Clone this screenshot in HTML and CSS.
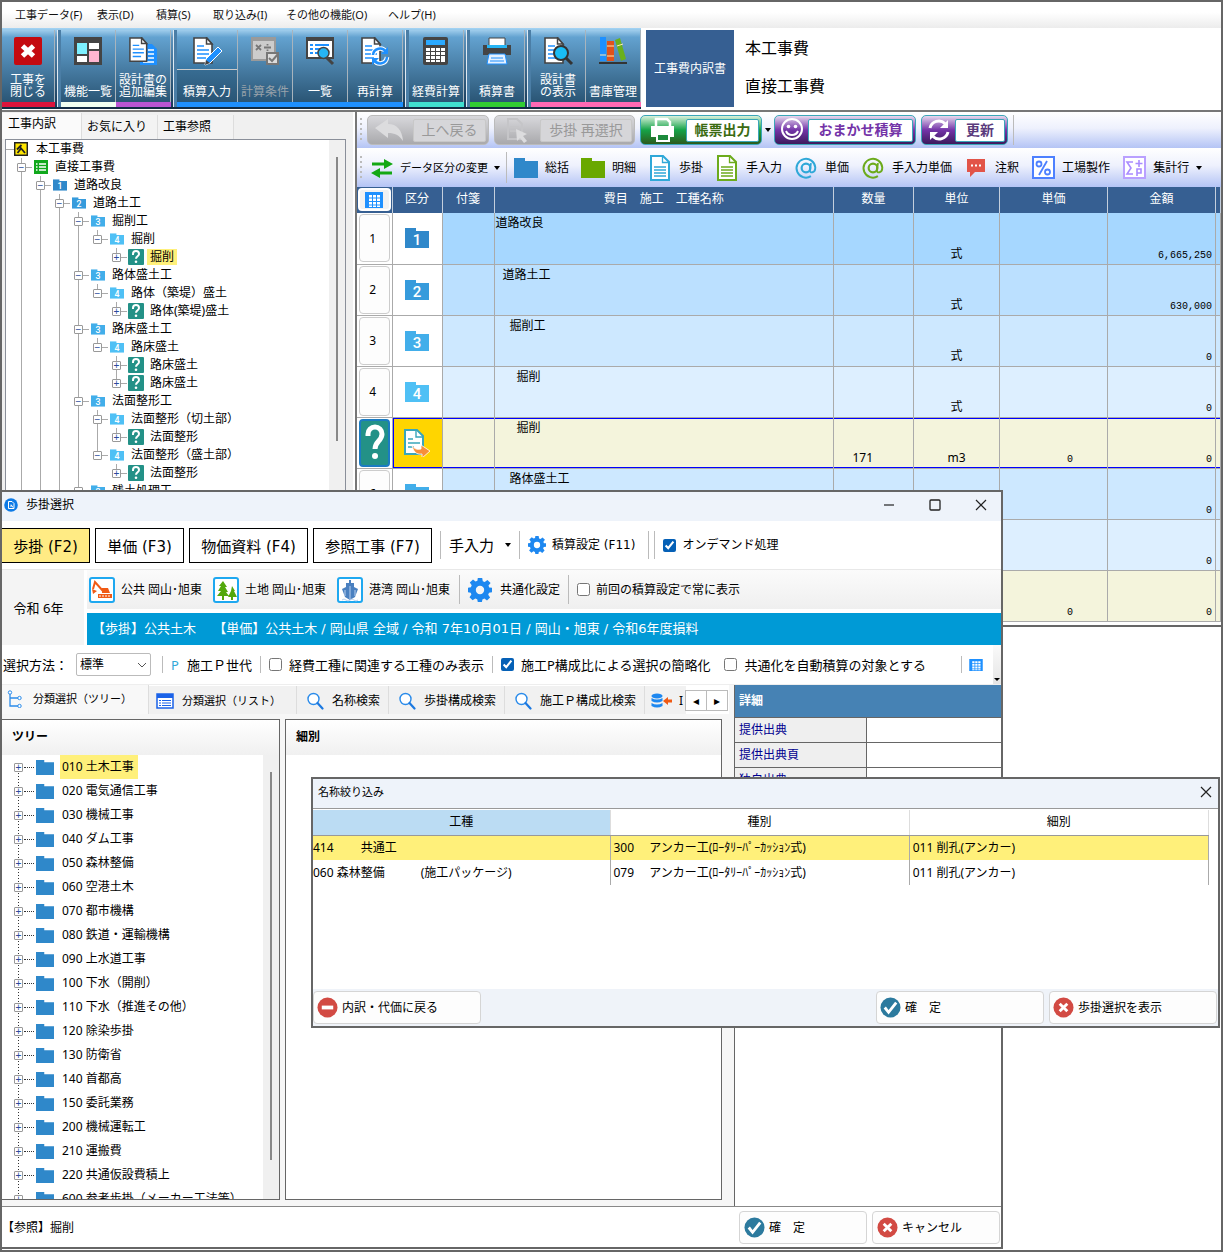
FILE: index.html
```html
<!DOCTYPE html>
<html lang="ja">
<head>
<meta charset="utf-8">
<title>工事費内訳書</title>
<link rel="stylesheet" href="styles.css">
</head>
<body>
<svg class="defs" aria-hidden="true">
  <symbol id="folder" viewBox="0 0 24 20"><path fill="currentColor" d="M0 0h11v3h13v17H0z"/></symbol>
  <symbol id="doc" viewBox="0 0 20 26"><path d="M1 1h12l6 6v18H1z" fill="#fff" stroke="currentColor" stroke-width="2"/><path d="M12.500 1v6.500H19M4 12h12M4 15h12M4 18h12M4 21h12" fill="none" stroke="currentColor" stroke-width="1.300"/></symbol>
  <symbol id="page" viewBox="0 0 28 28"><path d="M1 1h13l5 6v19H1z" fill="#fff" stroke="#444" stroke-width="1.600"/><path d="M13.500 1v6H19z" fill="#fff" stroke="#444" stroke-width="1.500"/><path d="M4 9h7M4 13h12M4 17h12M4 21h9" stroke="#1e90ff" stroke-width="1.500"/></symbol>
  <symbol id="gear" viewBox="0 0 24 24"><path fill="#1e88f0" fill-rule="evenodd" d="M9.800 0h4.400l.6 3.300 1.900.8L19.400 2l3.200 3-2.100 2.500.7 2 2.800.3v4.400l-3 .6-.8 1.900 1.900 2.700-3.100 3.100-2.600-1.900-2 .8-.5 2.600H9.800l-.6-2.800-1.900-.8-2.700 1.900-3.100-3 1.900-2.700-.7-1.900L0 14.200V9.800l2.900-.6.8-1.900L1.800 4.600 5 1.500l2.500 1.900 1.900-.7zM12 7.800a4.200 4.200 0 1 0 0 8.400a4.200 4.200 0 1 0 0-8.400z"/></symbol>
  <symbol id="mag" viewBox="0 0 18 18"><circle cx="7.500" cy="7" r="5.500" fill="#fff" stroke="#2a8bea" stroke-width="1.400"/><path d="M11.500 11l5 5.500" stroke="#1c79e0" stroke-width="2.200" stroke-linecap="round"/></symbol>
  <symbol id="ask" viewBox="0 0 16 16"><rect width="16" height="16" rx="1" fill="#239187"/><path d="M5 6V5a3 3 0 0 1 6 0c0 2.200-3 2.300-3 4.700" fill="none" stroke="#fff" stroke-width="2"/><circle cx="8" cy="12.700" r="1.300" fill="#fff"/></symbol>
  <symbol id="grid" viewBox="0 0 18 16"><path fill="#1e90ff" d="M0 0h18v16H0z"/><path fill="#fff" d="M4 3h3v2.500H4zM8 3h3v2.500H8zM12 3h3v2.500h-3zM4 6.500h3V9H4zM8 6.500h3V9H8zM12 6.500h3V9h-3zM4 10h3v2.500H4zM8 10h3v2.500H8zM12 10h3v2.500h-3zM4 13.500h3V15H4zM8 13.500h3V15H8zM12 13.500h3V15h-3z"/></symbol>
  <symbol id="check" viewBox="0 0 22 22"><circle cx="11" cy="11" r="10.500" fill="#2c7a9e"/><path d="M5 11l4 5 8-10" fill="none" stroke="#fff" stroke-width="3"/></symbol>
  <symbol id="cross" viewBox="0 0 22 22"><circle cx="11" cy="11" r="10.500" fill="#d24a43"/><path d="M7 7l8 8M15 7l-8 8" stroke="#fff" stroke-width="3"/></symbol>
  <symbol id="close" viewBox="0 0 12 12"><path d="M1 1l10 10M11 1L1 11" stroke="#222" stroke-width="1.200"/></symbol>
  <symbol id="at" viewBox="0 0 22 22"><circle cx="11" cy="11" r="4" fill="none" stroke="currentColor" stroke-width="2"/><path d="M15.500 6.500l-1 6.500c-.4 3 5 3 5-2.500a8.600 8.600 0 1 0-4 8" fill="none" stroke="currentColor" stroke-width="1.800"/></symbol>
</svg>

<div class="desktop">
<main class="mainwin">
  <nav class="menubar">
    <a href="#">工事データ(F)</a><a href="#">表示(D)</a><a href="#">積算(S)</a><a href="#">取り込み(I)</a><a href="#">その他の機能(O)</a><a href="#">ヘルプ(H)</a>
  </nav>

  <header class="ribbon">
    <div class="bigbar">
      <div class="grp red">
        <button class="big"><svg viewBox="0 0 28 28"><rect width="28" height="28" rx="2" fill="#c40a10"/><path d="M8.500 9l11 10M19.500 9l-11 10" stroke="#fff" stroke-width="5"/></svg><span>工事を<br>閉じる</span></button>
      </div>
      <div class="grp mint">
        <button class="big"><svg viewBox="0 0 28 28"><path fill="#444" d="M0 0h28v28H0z"/><path fill="#7df0ff" d="M3 6h10v11H3z"/><path fill="#fff" d="M15 6h10v6H15zM3 19h10v6H3z"/><path fill="#ffb6d0" d="M15 14h10v11H15z"/></svg><span>機能一覧</span></button>
      </div>
      <div class="grp violet join">
        <button class="big"><svg viewBox="0 0 28 28"><path d="M11 7h12l5 5v16H11z" fill="#1e90ff"/><path d="M19 13h6M19 17h6M19 21h6M14 25h11" stroke="#fff" stroke-width="1.500"/><use href="#page" width="26" height="26"/></svg><span>設計書の<br>追加編集</span></button>
      </div>
      <div class="grp blue">
        <button class="big wide split"><svg viewBox="0 0 28 28"><use href="#page" width="28" height="28"/><path d="M25 10l4 4-12 12-5 2 1-6z" fill="#1e90ff" stroke="#fff"/><path d="M12 28l1-5 4 3z" fill="#444"/></svg><span>積算入力</span></button>
        <button class="big" disabled><svg viewBox="0 0 28 28"><path fill="#9a9a9a" d="M0 0h25v24H0z"/><path fill="#ccc" d="M2 4h21v18H2z"/><path d="M5 8l5 5M10 8l-5 5M13 10.500h7M16.500 7v1.500M16.500 12.500V14" stroke="#777" stroke-width="1.800"/><path fill="#ddd" stroke="#777" stroke-width="2" d="M16 16h11v11H16z"/><path d="M18 21l3 3 6-7" fill="none" stroke="#777" stroke-width="2"/></svg><span>計算条件</span></button>
        <button class="big"><svg viewBox="0 0 28 28"><path fill="#444" d="M0 0h28v22H0z"/><path fill="#fff" d="M2 4h24v16H2z"/><path d="M4 8h3M4 12h3M4 16h3M9 8h14M9 12h6M9 16h5" stroke="#1e90ff" stroke-width="2"/><path d="M20 20l7 7" stroke="#444" stroke-width="3"/><circle cx="17.500" cy="16" r="5.500" fill="#26b5f5" stroke="#444" stroke-width="1.500"/></svg><span>一覧</span></button>
        <button class="big"><svg viewBox="0 0 28 28"><use href="#page" width="28" height="28"/><path d="M12 18a7 7 0 0 1 13-3M26 20a7 7 0 0 1-13 3" fill="none" stroke="#fff" stroke-width="4.500"/><path d="M12 18a7 7 0 0 1 13-3M26 20a7 7 0 0 1-13 3" fill="none" stroke="#1e90ff" stroke-width="2.500"/><path d="M27 10v7h-7zM11 28v-7h7z" fill="#1e90ff"/></svg><span>再計算</span></button>
      </div>
      <div class="grp turq">
        <button class="big"><svg viewBox="0 0 28 28"><rect x="1" width="25" height="28" rx="2" fill="#444"/><path fill="#2aa9ff" d="M4 3h19v5H4z"/><path fill="#fff" d="M4 11h4v3H4zM9 11h4v3H9zM14 11h4v3h-4zM19 11h4v3h-4zM4 15h4v3H4zM9 15h4v3H9zM14 15h4v3h-4zM19 15h4v3h-4zM4 19h4v3H4zM9 19h4v3H9zM14 19h4v3h-4zM19 19h4v6h-4zM4 23h4v2H4zM9 23h4v2H9zM14 23h4v2h-4z"/></svg><span>経費計算</span></button>
      </div>
      <div class="grp green">
        <button class="big"><svg viewBox="0 0 28 28"><path fill="#fff" stroke="#444" d="M6 1h16v9H6z"/><path fill="#444" d="M0 8h28v10H0z"/><path fill="#26b5f5" d="M4 8h20v3H4z"/><path fill="#e5f1ff" stroke="#1e90ff" d="M6 17h16l2 10H4z"/><path d="M8 21h12M7 24h14" stroke="#1e90ff"/></svg><span>積算書</span></button>
      </div>
      <div class="grp pink">
        <button class="big"><svg viewBox="0 0 28 28"><use href="#page" width="28" height="28"/><path d="M21 20l7 7" stroke="#333" stroke-width="3"/><circle cx="17" cy="16" r="7" fill="#19bdf5" stroke="#333" stroke-width="2"/></svg><span>設計書<br>の表示</span></button>
        <button class="big"><svg viewBox="0 0 28 28"><path fill="#1e90ff" d="M1 0h6v24H1z"/><path fill="#e0521c" d="M8 4h7v20H8z"/><path fill="#6ab01c" d="M16 3l5-2 6 21-5 2z"/><path d="M1 18h6M8 9h7M8 19h7M18 9l6-2" stroke="#ffe9b0"/><path fill="#333" d="M0 25h28v2H0z"/></svg><span>書庫管理</span></button>
      </div>
    </div>
    <div class="badge">工事費内訳書</div>
    <div class="heads"><p>本工事費</p><p>直接工事費</p></div>
  </header>

  <div class="panes">
    <aside class="left">
      <div class="ltabs"><button class="on">工事内訳</button><button>お気に入り</button><button>工事参照</button></div>
      <div class="treebox">
        <div class="tree">
          <div class="root"><i></i><svg viewBox="0 0 14 14"><path fill="#ffe600" stroke="#222" stroke-width="1.500" d="M.7.700h12.600v12.600H.7z"/><path d="M3 7.500l4.500-4.500M5.500 4.500L11 11M7 6.500L3.500 11" stroke="#222" stroke-width="1.800"/></svg><span>本工事費</span></div>
          <ul>
            <li><div class="n"><b class="ex">−</b><svg viewBox="0 0 14 14"><path fill="#11a81c" d="M0 0h14v14H0z"/><path d="M2 4h1.500M5 4h7M2 7h1.500M5 7h7M2 10h1.500M5 10h7" stroke="#fff" stroke-width="1.400"/></svg><span>直接工事費</span></div>
            <ul><li><div class="n"><b class="ex">−</b><svg class="f1" viewBox="0 0 24 20"><use href="#folder"/><text x="12" y="17">1</text></svg><span>道路改良</span></div>
            <ul><li><div class="n"><b class="ex">−</b><svg class="f2" viewBox="0 0 24 20"><use href="#folder"/><text x="12" y="17">2</text></svg><span>道路土工</span></div>
            <ul>
              <li><div class="n"><b class="ex">−</b><svg class="f3" viewBox="0 0 24 20"><use href="#folder"/><text x="12" y="17">3</text></svg><span>掘削工</span></div>
                <ul><li class="end"><div class="n"><b class="ex">−</b><svg class="f4" viewBox="0 0 24 20"><use href="#folder"/><text x="12" y="17">4</text></svg><span>掘削</span></div>
                  <ul><li class="end"><div class="n"><b class="ex">+</b><svg class="q"><use href="#ask"/></svg><span class="hit">掘削</span></div></li></ul></li></ul></li>
              <li><div class="n"><b class="ex">−</b><svg class="f3" viewBox="0 0 24 20"><use href="#folder"/><text x="12" y="17">3</text></svg><span>路体盛土工</span></div>
                <ul><li class="end"><div class="n"><b class="ex">−</b><svg class="f4" viewBox="0 0 24 20"><use href="#folder"/><text x="12" y="17">4</text></svg><span>路体（築堤）盛土</span></div>
                  <ul><li class="end"><div class="n"><b class="ex">+</b><svg class="q"><use href="#ask"/></svg><span>路体(築堤)盛土</span></div></li></ul></li></ul></li>
              <li><div class="n"><b class="ex">−</b><svg class="f3" viewBox="0 0 24 20"><use href="#folder"/><text x="12" y="17">3</text></svg><span>路床盛土工</span></div>
                <ul><li class="end"><div class="n"><b class="ex">−</b><svg class="f4" viewBox="0 0 24 20"><use href="#folder"/><text x="12" y="17">4</text></svg><span>路床盛土</span></div>
                  <ul><li><div class="n"><b class="ex">+</b><svg class="q"><use href="#ask"/></svg><span>路床盛土</span></div></li>
                  <li class="end"><div class="n"><b class="ex">+</b><svg class="q"><use href="#ask"/></svg><span>路床盛土</span></div></li></ul></li></ul></li>
              <li><div class="n"><b class="ex">−</b><svg class="f3" viewBox="0 0 24 20"><use href="#folder"/><text x="12" y="17">3</text></svg><span>法面整形工</span></div>
                <ul><li><div class="n"><b class="ex">−</b><svg class="f4" viewBox="0 0 24 20"><use href="#folder"/><text x="12" y="17">4</text></svg><span>法面整形（切土部）</span></div>
                  <ul><li class="end"><div class="n"><b class="ex">+</b><svg class="q"><use href="#ask"/></svg><span>法面整形</span></div></li></ul></li>
                <li class="end"><div class="n"><b class="ex">−</b><svg class="f4" viewBox="0 0 24 20"><use href="#folder"/><text x="12" y="17">4</text></svg><span>法面整形（盛土部）</span></div>
                  <ul><li class="end"><div class="n"><b class="ex">+</b><svg class="q"><use href="#ask"/></svg><span>法面整形</span></div></li></ul></li></ul></li>
              <li><div class="n"><b class="ex">−</b><svg class="f3" viewBox="0 0 24 20"><use href="#folder"/><text x="12" y="17">3</text></svg><span>残土処理工</span></div></li>
            </ul></li></ul></li></ul></li>
          </ul>
        </div>
        <div class="sbar"><i></i></div>
      </div>
    </aside>

    <section class="right">
      <div class="bar1">
        <i class="grip"></i>
        <button class="pill" disabled><svg viewBox="0 0 30 26"><path fill="#dcdcde" d="M0 11L13 2v5c9 0 14 6 15 17-4-6-8-8-15-8v5z"/></svg><span>上へ戻る</span></button>
        <button class="pill" disabled><svg viewBox="0 0 30 26"><path d="M6 2h9l5 5v15H6z" fill="none" stroke="#c5c5c8" stroke-width="2"/><path d="M8 10h9M8 14h7" stroke="#c5c5c8" stroke-width="2"/><path fill="#dcdcde" d="M14 12l11 5-4 2 4 5-3 2-4-5-3 3z"/></svg><span class="w92">歩掛 再選択</span></button>
        <button class="pill pgreen"><svg viewBox="0 0 30 26"><path d="M8 9V2h11l3 3v4" fill="none" stroke="#fff" stroke-width="2.500"/><path fill="#fff" d="M3 9h23v11h-4v-4H8v4H3z"/><path d="M9 17h12v7H9z" fill="#1c8a3c" stroke="#fff" stroke-width="2"/></svg><span>帳票出力</span></button>
        <i class="caret"></i>
        <button class="pill ppurple"><svg viewBox="0 0 30 26"><circle cx="15" cy="12" r="10" fill="none" stroke="#fff" stroke-width="2"/><circle cx="11.500" cy="9.500" r="1.800" fill="#fff"/><circle cx="18.500" cy="9.500" r="1.800" fill="#fff"/><path d="M9 14a6.500 6.500 0 0 0 12 0" fill="none" stroke="#fff" stroke-width="2"/></svg><span class="w104">おまかせ積算</span></button>
        <button class="pill ppurple dim"><svg viewBox="0 0 30 26"><path d="M6 11a9 9 0 0 1 15-4.500M24 15a9 9 0 0 1-15 4.500" fill="none" stroke="#fff" stroke-width="3"/><path d="M24 3v8h-8zM6 23v-8h8z" fill="#fff"/></svg><span class="w48">更新</span></button>
        <i class="sep"></i>
      </div>
      <div class="bar2">
        <i class="grip"></i>
        <button class="tb chg"><svg viewBox="0 0 24 24"><path d="M2 8h14M22 17H8" stroke="#13a813" stroke-width="3"/><path fill="#13a813" d="M14 3l9 5-9 5zM10 12l-9 5 9 5z"/></svg><span>データ区分の変更</span><i class="caret"></i></button>
        <i class="sep"></i>
        <button class="tb"><svg class="c1" viewBox="0 0 24 20"><use href="#folder"/></svg><span>総括</span></button>
        <button class="tb"><svg class="c2" viewBox="0 0 24 20"><use href="#folder"/></svg><span>明細</span></button>
        <button class="tb"><svg class="c3"><use href="#doc"/></svg><span>歩掛</span></button>
        <button class="tb"><svg class="c4"><use href="#doc"/></svg><span>手入力</span></button>
        <button class="tb"><svg class="c3"><use href="#at"/></svg><span>単価</span></button>
        <button class="tb"><svg class="c4"><use href="#at"/></svg><span>手入力単価</span></button>
        <button class="tb"><svg viewBox="0 0 24 24"><path fill="#e25448" d="M3 3h18v13H11l-5 5v-5H3z"/><path d="M7 9.500h2M11 9.500h2M15 9.500h2" stroke="#fff" stroke-width="2"/></svg><span>注釈</span></button>
        <button class="tb"><svg viewBox="0 0 24 24"><path d="M2 1h21v21H2z" fill="#fff" stroke="#4d80ff" stroke-width="2"/><circle cx="8" cy="8" r="2.500" fill="none" stroke="#4d80ff" stroke-width="1.800"/><circle cx="16.500" cy="16" r="2.500" fill="none" stroke="#4d80ff" stroke-width="1.800"/><path d="M16 5L8 19" stroke="#4d80ff" stroke-width="1.800"/></svg><span>工場製作</span></button>
        <button class="tb"><svg viewBox="0 0 24 24"><path d="M2 1h21v21H2z" fill="#fff" stroke="#b9a0ff" stroke-width="2"/><path d="M11 6H5l4 6-4 6h6M17 4v7M13.500 7.500h7M15 20v-7h4v4h-4" fill="none" stroke="#a98bff" stroke-width="1.600"/></svg><span>集計行</span><i class="caret"></i></button>
      </div>
      <table class="grid">
        <colgroup><col class="k0"><col class="k1"><col class="k2"><col><col class="k4"><col class="k5"><col class="k6"><col class="k6"><col class="k8"></colgroup>
        <thead><tr><th><span class="gbtn"><svg><use href="#grid"/></svg></span></th><th>区分</th><th>付箋</th><th>費目　施工　工種名称</th><th>数量</th><th>単位</th><th>単価</th><th>金額</th><th></th></tr></thead>
        <tbody>
          <tr class="r1"><th><span>1</span></th><td class="ic"><svg class="f1" viewBox="0 0 24 20"><use href="#folder"/><text x="12" y="17">1</text></svg></td><td></td><td class="nm">道路改良</td><td></td><td class="u">式</td><td></td><td class="num">6,665,250</td><td></td></tr>
          <tr class="r2"><th><span>2</span></th><td class="ic"><svg class="f2" viewBox="0 0 24 20"><use href="#folder"/><text x="12" y="17">2</text></svg></td><td></td><td class="nm i1">道路土工</td><td></td><td class="u">式</td><td></td><td class="num">630,000</td><td></td></tr>
          <tr class="r3"><th><span>3</span></th><td class="ic"><svg class="f3" viewBox="0 0 24 20"><use href="#folder"/><text x="12" y="17">3</text></svg></td><td></td><td class="nm i2">掘削工</td><td></td><td class="u">式</td><td></td><td class="num">0</td><td></td></tr>
          <tr class="r4"><th><span>4</span></th><td class="ic"><svg class="f4" viewBox="0 0 24 20"><use href="#folder"/><text x="12" y="17">4</text></svg></td><td></td><td class="nm i3">掘削</td><td></td><td class="u">式</td><td></td><td class="num">0</td><td></td></tr>
          <tr class="r5 sel"><th><span><svg viewBox="0 0 28 40"><path d="M7 13V11a7 7 0 0 1 14 0c0 7-7 7-7 15" fill="none" stroke="#fff" stroke-width="5"/><circle cx="14" cy="33" r="3" fill="#fff"/></svg></span></th><td class="ic"><svg class="go" viewBox="0 0 26 28"><path d="M1 1h12l6 6v18H1z" fill="#fff" stroke="#3aa6ba" stroke-width="2"/><path d="M12 1v7h7M4 10h5M4 14h12M4 18h6" fill="none" stroke="#3aa6ba" stroke-width="1.400"/><path d="M8 16c2 4 5 5 9 4v-4l9 6-8 7v-4c-6 1-9-3-10-9z" fill="#f78f3a" stroke="#fff" stroke-width=".8"/></svg></td><td></td><td class="nm i3">掘削</td><td class="q2">171</td><td class="u">m3</td><td class="num up">0</td><td class="num">0</td><td></td></tr>
          <tr class="r3"><th><span>6</span></th><td class="ic"><svg class="f3" viewBox="0 0 24 20"><use href="#folder"/><text x="12" y="17">3</text></svg></td><td></td><td class="nm i2">路体盛土工</td><td></td><td class="u">式</td><td></td><td class="num">0</td><td></td></tr>
          <tr class="r4"><th></th><td class="ic"></td><td></td><td></td><td></td><td></td><td></td><td class="num">0</td><td></td></tr>
          <tr class="r5"><th></th><td class="ic"></td><td></td><td></td><td></td><td></td><td class="num up">0</td><td class="num">0</td><td></td></tr>
        </tbody>
      </table>
    </section>
  </div>
</main>

<section class="dlg picker">
  <div class="title"><svg class="logo" viewBox="0 0 14 14"><circle cx="7" cy="7" r="6.800" fill="#0d7ae6"/><path d="M4.500 3.500h3.500l2 2v5H4.500zM6 8h2M7 6.500l2 3" fill="none" stroke="#fff"/></svg><span>歩掛選択</span>
    <div class="wbtns"><svg viewBox="0 0 12 12"><path d="M1 6h10" stroke="#222" stroke-width="1.200"/></svg><svg viewBox="0 0 12 12"><rect x="1" y="1" width="10" height="10" rx="1" fill="none" stroke="#222" stroke-width="1.300"/></svg><svg><use href="#close"/></svg></div></div>
  <div class="frow">
    <button class="fk w88 on">歩掛 (F2)</button><button class="fk w88">単価 (F3)</button><button class="fk w118">物価資料 (F4)</button><button class="fk w118">参照工事 (F7)</button>
    <i class="sep"></i><button class="plain t15">手入力<i class="caret"></i></button><i class="sep"></i>
    <button class="plain wideface"><svg class="g18"><use href="#gear"/></svg>積算設定 (F11)</button>
    <i class="sep dbl"></i>
    <label class="ck"><input type="checkbox" checked>オンデマンド処理</label>
  </div>
  <div class="env">
    <div class="year">令和 6年</div>
    <div class="envr">
      <div class="areas">
        <button class="area"><svg viewBox="0 0 26 26"><rect x="1" y="1" width="24" height="24" rx="2" fill="#fff" stroke="#1ea8f0" stroke-width="2"/><path d="M4 12l2-7 8 9" fill="none" stroke="#f05a14" stroke-width="2"/><path fill="#f05a14" d="M3 12l5 2-4 3zM13 11h6l2 5h-8zM9 17h14v4H9z"/><path d="M10 19h12" stroke="#fff" stroke-dasharray="2 1"/></svg>公共 岡山･旭東</button>
        <button class="area"><svg viewBox="0 0 26 26"><rect x="1" y="1" width="24" height="24" rx="2" fill="#fff" stroke="#1ea8f0" stroke-width="2"/><path fill="#53a80c" d="M10 4l4 6h-2l3 5h-2l3 4h-5v4H9v-4H4l4-5H5l3-5H6zM19 9l3 5h-1l3 6h-4v3h-2v-3h-3l3-6z"/></svg>土地 岡山･旭東</button>
        <button class="area"><svg viewBox="0 0 26 26"><rect x="1" y="1" width="24" height="24" rx="2" fill="#fff" stroke="#1ea8f0" stroke-width="2"/><path fill="#4a80c0" d="M12 3h2v3h3v4l4 2-3 8-5 3-5-3-3-8 4-2V6h3z"/><path d="M13 9v13M8 13v6M18 13v6M5 23q2-2 4 0t4 0 4 0 4 0" fill="none" stroke="#b9d0ee"/></svg>港湾 岡山･旭東</button>
        <i class="sep"></i>
        <button class="plain cm"><svg class="g24"><use href="#gear"/></svg>共通化設定</button>
        <i class="sep"></i>
        <label class="ck"><input type="checkbox">前回の積算設定で常に表示</label>
      </div>
      <div class="cond">【歩掛】公共土木　 【単価】公共土木 / 岡山県 全域 / 令和 7年10月01日 / 岡山・旭東 / 令和6年度損料</div>
    </div>
  </div>
  <div class="selrow">
    <label for="how">選択方法：</label>
    <div class="selbox"><select id="how"><option>標準</option></select><svg viewBox="0 0 10 6"><path d="M1 1l4 4 4-4" fill="none" stroke="#555"/></svg></div>
    <i class="sep"></i><button class="plain gen"><em>P</em>施工Ｐ世代</button><i class="sep"></i>
    <label class="ck"><input type="checkbox">経費工種に関連する工種のみ表示</label><i class="sep"></i>
    <label class="ck"><input type="checkbox" checked>施工P構成比による選択の簡略化</label>
    <label class="ck gap"><input type="checkbox">共通化を自動積算の対象とする</label>
    <div class="tail"><i class="sep"></i><svg class="g14"><use href="#grid"/></svg><i class="more"></i></div>
  </div>
  <div class="work">
    <div class="wl">
      <div class="tabs">
        <button class="tab on"><svg viewBox="0 0 18 18"><path d="M3 3v13h8M3 8h8" fill="none" stroke="#2a8bea" stroke-width="1.300"/><g fill="#fff" stroke="#2a8bea"><circle cx="3" cy="2.500" r="1.700"/><circle cx="12.500" cy="8" r="1.700"/><circle cx="12.500" cy="16" r="1.700"/></g></svg>分類選択（ツリー）</button>
        <button class="tab"><svg viewBox="0 0 18 18"><path d="M1 2h16v14H1z" fill="#fff" stroke="#1a62e8" stroke-width="1.500"/><path fill="#1a62e8" d="M1 2h16v4H1z"/><path d="M3 8.500h2M3 11h2M3 13.500h2M6 8.500h9M6 11h9M6 13.500h9" stroke="#1a62e8"/></svg>分類選択（リスト）</button>
        <button class="tab"><svg><use href="#mag"/></svg>名称検索</button>
        <button class="tab"><svg><use href="#mag"/></svg>歩掛構成検索</button>
        <button class="tab"><svg><use href="#mag"/></svg>施工Ｐ構成比検索</button>
        <button class="tab last"><svg viewBox="0 0 22 18"><g fill="#1e88f0"><ellipse cx="6" cy="4" rx="5.500" ry="2.500"/><path d="M.5 6q5.500 3 11 0v3q-5.500 3-11 0zM.5 11q5.500 3 11 0v3q-5.500 3-11 0z"/></g><path fill="#f05a14" d="M12 9l5-4v2.500h4v3h-4V13z"/></svg>I</button>
        <div class="scr"><button aria-label="前">◂</button><button aria-label="次">▸</button></div>
      </div>
      <div class="cols">
        <div class="box cats">
          <h2>ツリー</h2>
          <div class="catbody">
            <ul class="cat">
              <li><b class="ex">+</b><svg><use href="#folder"/></svg><span class="hit">010 土木工事</span></li>
              <li><b class="ex">+</b><svg><use href="#folder"/></svg><span>020 電気通信工事</span></li>
              <li><b class="ex">+</b><svg><use href="#folder"/></svg><span>030 機械工事</span></li>
              <li><b class="ex">+</b><svg><use href="#folder"/></svg><span>040 ダム工事</span></li>
              <li><b class="ex">+</b><svg><use href="#folder"/></svg><span>050 森林整備</span></li>
              <li><b class="ex">+</b><svg><use href="#folder"/></svg><span>060 空港土木</span></li>
              <li><b class="ex">+</b><svg><use href="#folder"/></svg><span>070 都市機構</span></li>
              <li><b class="ex">+</b><svg><use href="#folder"/></svg><span>080 鉄道・運輸機構</span></li>
              <li><b class="ex">+</b><svg><use href="#folder"/></svg><span>090 上水道工事</span></li>
              <li><b class="ex">+</b><svg><use href="#folder"/></svg><span>100 下水（開削）</span></li>
              <li><b class="ex">+</b><svg><use href="#folder"/></svg><span>110 下水（推進その他）</span></li>
              <li><b class="ex">+</b><svg><use href="#folder"/></svg><span>120 除染歩掛</span></li>
              <li><b class="ex">+</b><svg><use href="#folder"/></svg><span>130 防衛省</span></li>
              <li><b class="ex">+</b><svg><use href="#folder"/></svg><span>140 首都高</span></li>
              <li><b class="ex">+</b><svg><use href="#folder"/></svg><span>150 委託業務</span></li>
              <li><b class="ex">+</b><svg><use href="#folder"/></svg><span>200 機械運転工</span></li>
              <li><b class="ex">+</b><svg><use href="#folder"/></svg><span>210 運搬費</span></li>
              <li><b class="ex">+</b><svg><use href="#folder"/></svg><span>220 共通仮設費積上</span></li>
              <li><b class="ex">+</b><svg><use href="#folder"/></svg><span>600 参考歩掛（メーカー工法等）</span></li>
            </ul>
            <div class="sbar"><i></i></div>
          </div>
        </div>
        <div class="box subs"><h2>細別</h2></div>
      </div>
    </div>
    <div class="detail">
      <table><colgroup><col class="dk"><col></colgroup><thead><tr><th colspan="2">詳細</th></tr></thead><tbody><tr><th>提供出典</th><td></td></tr><tr><th>提供出典頁</th><td></td></tr><tr><th>独自出典</th><td></td></tr></tbody></table>
    </div>
  </div>
  <div class="foot"><span>【参照】掘削</span><button class="act"><svg><use href="#check"/></svg>確　定</button><button class="act"><svg><use href="#cross"/></svg>キャンセル</button></div>
</section>

<section class="dlg filter">
  <div class="title"><span>名称絞り込み</span><div class="wbtns"><svg><use href="#close"/></svg></div></div>
  <div class="fbody">
    <table>
      <colgroup><col class="fk1"><col><col></colgroup>
      <thead><tr><th class="on">工種</th><th>種別</th><th>細別</th></tr></thead>
      <tbody>
        <tr class="on"><td>414　　 共通工</td><td>300　 アンカー工(ﾛｰﾀﾘｰﾊﾟｰｶｯｼｮﾝ式)</td><td>011 削孔(アンカー)</td></tr>
        <tr><td>060 森林整備　　　(施工パッケージ)</td><td>079　 アンカー工(ﾛｰﾀﾘｰﾊﾟｰｶｯｼｮﾝ式)</td><td>011 削孔(アンカー)</td></tr>
      </tbody>
    </table>
  </div>
  <div class="ffoot"><button class="act back"><svg viewBox="0 0 22 22"><circle cx="11" cy="11" r="10.500" fill="#d24a43"/><path d="M5 11h12" stroke="#fff" stroke-width="4"/></svg>内訳・代価に戻る</button><button class="act"><svg><use href="#check"/></svg>確　定</button><button class="act"><svg><use href="#cross"/></svg>歩掛選択を表示</button></div>
</section>
</div>
</body>
</html>
```
FILE: styles.css
```css
*{box-sizing:border-box}
body{margin:0;background:#fff;color:#000;font:12px/16px "Noto Sans","Noto Sans CJK JP",sans-serif}
button,select,input{font:inherit;color:inherit;margin:0}
button{border:0;background:none;padding:0;white-space:nowrap}
ul{list-style:none;margin:0;padding:0}
p,h2{margin:0}
svg{display:block;flex:none}
table{border-collapse:collapse;table-layout:fixed;width:100%}
th,td{padding:0;font-weight:400}
.defs{display:none}
.desktop{position:relative;min-height:100vh;border:2px solid #666;overflow:hidden}
.mainwin{border-bottom:2px solid #666;padding-bottom:3px}
.sep{width:1px;align-self:stretch;background:#bbb;flex:none}
.caret{width:0;height:0;border:3px solid transparent;border-top:4px solid #000;border-bottom:0;flex:none}

/* menu */
.menubar{display:grid;grid-template-columns:82px 59px 57px 73px 102px 1fr;height:26px;padding:0 13px;align-items:center;background:linear-gradient(#fff 40%,#ececec);font-size:11px}
.menubar a{color:#111;text-decoration:none;white-space:nowrap}

/* ribbon */
.ribbon{display:flex;height:82px;border-bottom:1px solid #fff;gap:5px}
.bigbar{display:flex;gap:6px;background:linear-gradient(#a5d5f5,#5c93bd 12%,#173a58);border-bottom:2px solid #122c44;padding-top:2px}
.grp{display:flex;border-bottom:5px solid;position:relative}
.grp+.grp:not(.join){box-shadow:-3px 0 0 #4b7ea6,-4px 0 0 #dfeaf3}
.join{margin-left:-6px}
.red{border-color:#dc143c}.mint{border-color:#f0fff0}.violet{border-color:#ba55d3}.blue{border-color:#1e90ff}.turq{border-color:#40e0d0}.green{border-color:#32cd32}.pink{border-color:#ff69b4}
.big{width:55px;display:flex;flex-direction:column;align-items:center;justify-content:space-between;padding:7px 0 4px;background:linear-gradient(#a0cdec,#63a2d0 10%,#2a5575);border-right:1px solid #a8b4bd;color:#fff;line-height:12px;text-align:center}
.big svg{width:28px;height:28px;overflow:visible}
.big span{white-space:nowrap}
.red .big{width:53px}
.wide{width:61px}
.split{background:linear-gradient(#a0cdec,#63a2d0 10%,#3a77a3 54%,#ccc 54%,#ccc 56%,#376c92 56%,#2a5575)}
.big:disabled{color:#98a2aa}
.badge{width:88px;margin:2px 0 2px;background:#365f92;color:#fff;display:grid;place-items:center}
.heads{padding:10px 6px;font-size:16px;line-height:20px;display:flex;flex-direction:column;gap:18px}

/* panes */
.panes{display:flex;border-top:2px solid #777}
.left{width:351px;display:flex;flex-direction:column;background:#f0f0f0;padding-right:7px;flex:none}
.ltabs{display:flex;height:27px;align-items:stretch;padding-top:1px}
.ltabs button{width:76px;text-align:left;padding-left:5px;border-right:1px solid #ddd;background:#f3f3f3;margin-top:2px}
.ltabs .on{width:80px;background:#fafafa;margin-top:0;padding:0 0 4px 6px}
.treebox{flex:1;display:flex;margin-left:3px;border:1px solid #8a8f99;background:#fff}
.tree{flex:1;overflow:hidden}
.sbar{width:16px;background:#f0f0f0;display:flex;justify-content:center;padding:17px 0 39px}
.sbar i{width:2px;background:#888}
.treebox .sbar{padding-bottom:180px}
.root{display:flex;align-items:center;height:18px}
.root i{width:8px;height:1px;background:#aaa}
.root svg{width:14px;height:14px}
.root span{margin-left:8px}
.tree>ul{margin-left:6px}
.tree ul ul{margin-left:19px}
.tree li{background:linear-gradient(#aaa,#aaa) 9px 0/1px 100% no-repeat}
.tree li.end{background-size:1px 9px}
.n{display:flex;align-items:center;height:18px;padding-left:5px;white-space:nowrap}
.ex{width:9px;height:9px;border:1px solid #999;border-radius:1px;background:#fff;color:#2b4a9b;font:10px/7px "Liberation Sans",sans-serif;text-align:center;flex:none;position:relative}
.n .ex{margin-right:8px}
.n .ex::after{content:"";position:absolute;left:8px;top:3px;width:6px;height:1px;background:#aaa}
.n svg{width:14px;height:14px}
.n .q{width:16px;height:16px;margin:0 -1px}
.n span{margin-left:4px;padding:0 3px}
.hit{background:#fff07a}
svg text{fill:#fff;font:500 15px Roboto,sans-serif;text-anchor:middle}
.f1,.c1{color:#2f88ca}.f2{color:#369bdc}.f3{color:#42aeea}.f4{color:#4fc0f5}
.c2{color:#69a800}.c3{color:#2fa8d8}.c4{color:#6cab1c}

.right{flex:1;min-width:0;margin-left:2px;border-left:2px solid #777}
.bar1,.bar2{display:flex;align-items:center;background:linear-gradient(#fff,#eef1fd 45%,#b4c4f5)}
.bar1{height:36px;gap:5px}
.bar2{height:39px;gap:12px;white-space:nowrap;overflow:hidden}
.grip{width:2px;height:24px;margin:0 0 0 3px;background:repeating-linear-gradient(#bbb 0 2px,transparent 2px 5px);flex:none}
.pill{height:30px;display:flex;align-items:center;gap:8px;border:1px solid #bbb;border-radius:5px;padding:2px 2px 2px 7px;background:linear-gradient(#d8d8dc,#a9a9ac);font-size:14px;color:#999}
.pill svg{width:30px;height:26px}
.pill span{width:73px;height:23px;line-height:20px;background:#d6d6d9;border:1px solid #c8c8c8;border-radius:2px}
.pill .w92{width:92px}.pill .w104{width:105px}.pill .w48{width:50px}
.pgreen,.ppurple{border-color:#3aa6b8;font-weight:700;color:#3b6b12}
.pgreen{background:linear-gradient(#d8f0dc,#16a348 50%,#2c5a1c)}
.ppurple{background:linear-gradient(#e5d8ee,#7434a8 50%,#3c1a5c);color:#7434a8;gap:1px;padding-left:2px}
.dim{color:#5a3a7c}
.pgreen span,.ppurple span{background:#fff;border-color:#3aa6b8}
.bar1 .caret{margin:0 -2px}
.bar1 .sep{margin:3px 0}
.tb{display:flex;align-items:center;gap:7px}
.tb svg{width:24px;height:26px}
.chg{font-size:11px;gap:6px;margin-left:-4px}
.bar2 .sep{margin:4px -5px 4px -6px}

.grid .k0{width:35px}.grid .k1{width:50px}.grid .k2{width:52px}.grid .k4{width:80px}.grid .k5{width:86px}.grid .k6{width:108px}.grid .k8{width:5px}
.grid thead th{height:26px;background:#365f92;color:#fff;border-right:1px solid #c4cfdd;vertical-align:top;padding-top:4px}
.grid thead th:first-child{padding:1px}
.gbtn{display:grid;place-items:center;height:23px;background:#f2f2f2;border:2px solid #fff;border-radius:4px}
.gbtn svg{width:18px;height:16px}
.grid tbody{line-height:17px}
.grid tbody tr{height:51px}
.grid td,.grid tbody th{border-right:1px solid #aaa;border-bottom:1px solid #aaa;vertical-align:bottom}
.grid tbody th{vertical-align:middle;padding:0 2px;background:#fff}
.grid tbody th span{display:grid;place-items:center;height:48px;padding-right:3px;border:1px solid #ccc;border-radius:4px;background:#fdfdfd}
.grid .ic{background:#fff;vertical-align:middle}
.ic svg{width:24px;height:20px;margin:auto}
.ic .go{width:26px;height:28px}
.grid .nm{vertical-align:top;padding:1px 0 0 1px}
.grid .i1{padding-left:8px}.grid .i2{padding-left:15px}.grid .i3{padding-left:22px}
.grid .u{text-align:center;padding-bottom:2px}
.grid .q2{text-align:right;padding:0 40px 2px 0}
.grid .num{text-align:right;padding:0 3px 0 0;font-family:"Liberation Mono",monospace;font-size:10px}
.grid .up{padding-right:34px}
.r1 td{background:#a6d7ff}.r2 td{background:#bbe0ff}.r3 td{background:#cde8ff}.r4 td{background:#ddefff}.r5 td{background:#f4f4dc}
.grid .sel td{box-shadow:inset 0 1px #00f,inset 0 -1px #00f}
.grid .sel .ic{background:#ffd500;box-shadow:inset 1px 1px #00f,inset 0 -1px #00f}
.grid tbody .sel th span{background:#239187;border:2px solid #1b7bc2;padding:0}
.sel th svg{width:28px;height:40px}

/* dialogs */
.dlg{position:absolute;background:#fff;display:flex;flex-direction:column;border:2px solid #666}
.title{height:29px;display:flex;align-items:center;background:#eef3fa;padding-bottom:3px;flex:none}
.wbtns{margin-left:auto;display:flex;gap:34px;padding-right:14px}
.wbtns svg{width:12px;height:12px}
.picker{left:0;right:218px;top:488px;bottom:1px;border-left:0}
.logo{width:14px;height:14px;margin:0 8px 0 2px}
.frow{display:flex;align-items:center;height:48px;gap:5px;flex:none}
.fk{height:35px;border:1px solid #000;font:15px "DejaVu Sans","Noto Sans CJK JP",sans-serif;flex:none}
.fk.on{background:#ffeb84;border-left:0}
.w88{width:89px}.w118{width:119px}
.fk.on{width:88px}
.plain{display:flex;align-items:center;gap:6px}
.wideface{font-family:"DejaVu Sans","Noto Sans CJK JP",sans-serif}
.frow .sep{margin:10px 3px}
.t15{font-size:15px;gap:11px}
.g18{width:18px;height:18px}.g24{width:24px;height:24px}.g14{width:14px;height:12px}
.frow .dbl{width:7px;background:none;border:solid #bbb;border-width:0 1px;margin-left:8px}
.ck{display:flex;align-items:center;gap:6px;white-space:nowrap}
.ck input{width:13px;height:13px;accent-color:#0560b6}
.env{display:flex;border-top:1px solid #e8e8e8;height:76px;flex:none}
.year{width:82px;background:#f4f4f4;display:grid;place-items:center;padding-right:9px;font-size:13px}
.envr{flex:1;display:flex;flex-direction:column;justify-content:space-between;padding-left:3px}
.areas{display:flex;align-items:center;height:39px;gap:8px;background:linear-gradient(#fbfbfb,#efefef)}
.area{display:flex;align-items:center;gap:6px;padding-left:2px;width:116px}
.area svg{width:26px;height:26px}
.areas .sep{margin:5px 0}
.cm{gap:8px}
.cond{height:32px;background:#009ad6;color:#fff;font:13px/31px "DejaVu Sans","Noto Sans CJK JP",sans-serif;padding-left:5px;white-space:pre;overflow:hidden}
.selrow{display:flex;align-items:center;height:40px;font-size:13px;padding-left:1px;gap:8px;white-space:nowrap;border-bottom:1px solid #eee;flex:none}
.selrow .ck{gap:7px}
.selbox{display:grid;align-items:center;width:75px;margin-right:3px;flex:none}
.selbox>*{grid-area:1/1}
.selbox select{appearance:none;height:23px;border:1px solid #bbb;border-radius:2px;background:#fff;padding:0 3px;font-size:12px}
.selbox svg{width:10px;height:6px;justify-self:end;margin-right:4px;pointer-events:none}
.selrow .sep{margin:11px 0}
.gen{gap:8px}
.gen em{font-style:normal;color:#2fa8d8}
.selrow .gap{margin-left:6px}
.tail{margin-left:auto;display:flex;align-items:center;align-self:stretch;gap:7px}
.more{width:8px;align-self:stretch;margin-left:3px;background:linear-gradient(#fafafa,#e5e5e5);display:flex;align-items:flex-end;justify-content:center;padding-bottom:3px}
.more::before{content:"";border:3px solid transparent;border-top-color:#000;border-bottom:0}
.work{flex:1;min-height:0;display:flex;border-bottom:1px solid #888}
.wl{flex:1;min-width:0;display:flex;flex-direction:column;background:#f6f6f6;padding-right:5px}
.tabs{display:flex;height:34px;background:#fff;border-bottom:5px solid #f6f6f6;flex:none}
.tab{display:flex;align-items:center;gap:8px;padding:2px 8px 0 9px;background:#f1f1f1;border-right:1px solid #ddd;margin-top:1px;flex:none}
.tab svg{width:18px;height:18px}
.tab.on{width:147px;background:#f8f8f8;margin-top:0;padding:0 0 2px 5px;font-size:11px}
.tab.on+.tab{width:148px;padding-left:7px;font-size:11px}
.tab.last{flex:1;min-width:0;padding-left:6px;gap:6px;border:0;overflow:hidden}
.tab.last svg{width:22px}
.scr{display:flex;flex:none;padding-right:1px}
.scr button{width:22px;height:21px;margin:5px 0 0 -1px;border:1px solid #bbb;background:#fff;line-height:16px}
.cols{flex:1;min-height:0;display:flex;gap:5px;padding:0 7px 6px 0}
.box{border:1px solid #666;background:#fff;display:flex;flex-direction:column;min-height:0}
.box h2{height:35px;font-size:12px;line-height:34px;padding-left:10px;background:linear-gradient(#fff,#f0f0f0);flex:none}
.cats{width:278px;border-left-width:0;flex:none}
.subs{flex:1}
.catbody{flex:1;min-height:0;display:flex}
.cat{flex:1;overflow:hidden}
.cat li{display:flex;align-items:center;height:24px;padding-left:12px;white-space:nowrap;background:repeating-linear-gradient(#333 0 1px,#fff 1px 3px) 16px 0/1px 100% no-repeat}
.cat li:first-child{background-position:16px 12px}
.cat .ex{margin-right:13px}
.cat .ex::after{content:"";position:absolute;left:9px;top:3px;width:10px;border-top:1px dotted #333}
.cat svg{width:18px;height:15px;color:#2f88ca}
.cat span{margin-left:6px;padding:0 4px 0 2px;line-height:24px}
.detail{width:267px;border-left:1px solid #666;background:#fff;flex:none}
.dk{width:131px}
.detail thead th{height:32px;background:#4682b4;color:#fff;font-weight:700;text-align:left;padding-left:4px;border-bottom:1px solid #666}
.detail tbody th{height:25px;background:#efefef;color:#000090;text-align:left;padding-left:4px}
.detail tbody th,.detail td{border-bottom:1px solid #666}
.detail tbody th{border-right:1px solid #666}
.foot{height:40px;display:flex;align-items:center;gap:5px;padding:1px 1px 0 0;flex:none}
.foot span{margin-right:auto}
.act{display:flex;align-items:center;gap:4px;width:128px;height:33px;padding-left:4px;border:1px solid #d5d5d5;border-radius:4px;background:#fdfdfd}
.act svg{width:21px;height:21px}
.filter{left:309px;right:1px;top:775px;height:251px}
.filter .title{border-bottom:1px solid #999;height:30px;font-size:11px;padding-left:5px}
.filter .wbtns{padding-right:6px}
.fbody{flex:1;padding:1px 9px 0 0}
.fk1{width:297px}
.fbody th{height:25px;border-right:1px solid #ddd;border-bottom:1px solid #999}
.fbody th.on{background:#bbdcf3}
.fbody td{height:25px;border-right:1px solid #aaa;white-space:pre}
.fbody td+td{padding-left:3px}
.fbody tr.on td{background:#fff07a}
.ffoot{height:37px;display:flex;gap:5px;align-items:center;background:#eff3f9;padding-right:1px;flex:none}
.ffoot .act{width:168px;padding-left:3px}
.ffoot .back{margin-right:auto}
```
